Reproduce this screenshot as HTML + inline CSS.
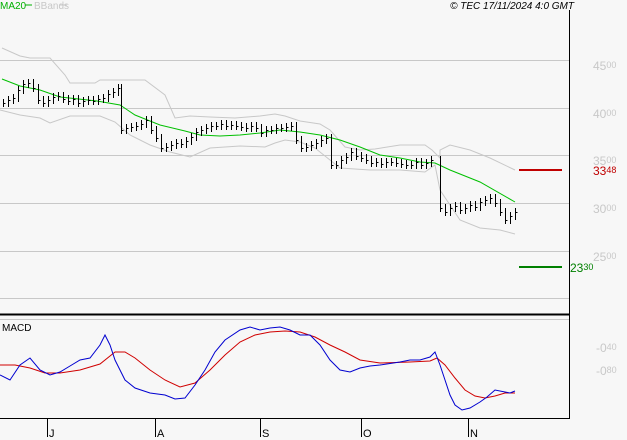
<!DOCTYPE html>
<html><head><style>
body{margin:0;background:#f7f7f7;width:627px;height:440px;overflow:hidden;font-family:"Liberation Sans",sans-serif}
svg{position:absolute;left:0;top:0}
text{font-family:"Liberation Sans",sans-serif}
</style></head><body>
<svg width="627" height="440" xmlns="http://www.w3.org/2000/svg" id="s">
<rect width="627" height="440" fill="#f7f7f7"/>
<g stroke="#c8c8c8" stroke-width="1">
<line x1="0" y1="60.5" x2="569" y2="60.5"/>
<line x1="0" y1="108.5" x2="569" y2="108.5"/>
<line x1="0" y1="155.5" x2="569" y2="155.5"/>
<line x1="0" y1="203.5" x2="569" y2="203.5"/>
<line x1="0" y1="251.5" x2="569" y2="251.5"/>
<line x1="0" y1="298.5" x2="569" y2="298.5"/>
<line x1="0" y1="319.5" x2="569" y2="319.5"/>
</g>
<line x1="569.5" y1="10" x2="569.5" y2="419" stroke="#000"/>
<line x1="0" y1="314.5" x2="569" y2="314.5" stroke="#000" stroke-width="2"/>
<line x1="0" y1="418.5" x2="570" y2="418.5" stroke="#000"/>
<g stroke="#000">
<line x1="47.5" y1="419" x2="47.5" y2="437"/><line x1="155.5" y1="419" x2="155.5" y2="437"/>
<line x1="260.5" y1="419" x2="260.5" y2="437"/><line x1="361.5" y1="419" x2="361.5" y2="437"/>
<line x1="468.5" y1="419" x2="468.5" y2="437"/>
</g>
<g font-size="11" fill="#000">
<text x="49" y="437">J</text><text x="157" y="437">A</text><text x="262" y="437">S</text><text x="363" y="437">O</text><text x="470" y="437">N</text>
</g>
<g font-size="12" fill="#c8c8c8">
<text x="593" y="70">45<tspan font-size="9" dy="-2">00</tspan></text>
<text x="593" y="118">40<tspan font-size="9" dy="-2">00</tspan></text>
<text x="593" y="165">35<tspan font-size="9" dy="-2">00</tspan></text>
<text x="593" y="213">30<tspan font-size="9" dy="-2">00</tspan></text>
<text x="593" y="261">25<tspan font-size="9" dy="-2">00</tspan></text>
<text x="596" y="352">-0<tspan font-size="9" dy="-2">40</tspan></text>
<text x="596" y="375">-0<tspan font-size="9" dy="-2">80</tspan></text>
</g>
<text x="593" y="175" font-size="12" fill="#c00000">33<tspan font-size="9" dy="-2">48</tspan></text>
<text x="570" y="272" font-size="12" fill="#008000">23<tspan font-size="9" dy="-2">30</tspan></text>
<line x1="519" y1="170" x2="562" y2="170" stroke="#c00000" stroke-width="2"/>
<line x1="519" y1="267" x2="562" y2="267" stroke="#008000" stroke-width="2"/>
<text x="0" y="9" font-size="10" fill="#00b000">MA20</text>
<line x1="25" y1="5" x2="32" y2="5" stroke="#00b000"/>
<text x="34" y="9" font-size="10" fill="#c8c8c8">BBands</text>
<line x1="60" y1="5" x2="67" y2="5" stroke="#c8c8c8"/>
<text x="574" y="9" font-size="10" font-style="italic" text-anchor="end" fill="#000">© TEC 17/11/2024 4:0 GMT</text>
<text x="2" y="331" font-size="10" fill="#000">MACD</text>
<g fill="none" stroke-width="1">
<polyline stroke="#c8c8c8" points="2,48 20,56 30,58 50,58 65,75 70,83 95,83 100,80 115,80 145,80 165,95 175,118 190,116 210,117 235,118 260,116 275,114 285,116 300,121 320,124 330,130 345,147 360,150 375,149 400,145 425,145 432,150 440,158 440,150 450,145 470,150 490,158 515,170"/>
<polyline stroke="#c8c8c8" points="0,110 20,115 40,118 50,123 70,116 100,116 115,122 130,135 150,145 170,152 190,157 210,148 240,146 265,147 275,143 285,140 300,142 315,148 340,168 370,170 400,170 425,172 435,165 440,190 460,220 480,228 500,230 515,234"/>
<polyline stroke="#00c000" points="2,79 20,86 40,90 60,97 97,101 120,105 135,115 160,125 185,131 200,135 220,136 240,135 260,133 280,130 300,132 320,135 340,140 360,147 380,155 400,158 420,162 435,163 450,170 480,182 515,202"/>
<polyline stroke="#d00000" points="0,365 15,365 30,368 45,373 60,373 80,370 100,364 115,352 125,352 135,358 150,370 165,380 180,387 195,383 210,370 225,355 240,342 255,335 270,332 285,331 300,332 315,337 330,345 345,352 360,360 380,363 410,362 430,361 437,358 445,365 455,378 465,390 475,396 485,398 495,396 505,393 515,393"/>
<polyline stroke="#0000d0" points="0,375 10,380 20,365 30,358 40,370 50,375 60,372 70,366 80,360 90,358 100,345 105,335 110,345 115,360 125,380 135,388 150,393 165,395 175,399 185,398 195,385 205,370 215,352 225,340 240,330 250,327 260,330 270,328 280,327 290,330 300,335 310,335 320,345 330,360 340,370 350,372 360,368 370,366 380,365 400,362 410,360 420,360 430,357 435,352 440,365 445,380 450,395 455,405 462,410 470,408 480,402 487,397 495,390 505,392 510,393 515,391"/>
</g>
<g id="bars" stroke="#000" stroke-width="1"></g>
</svg>
<script>
var d=[[3,103],[8,100],[13,98],[18,90],[23,84],[28,83],[33,88],[38,100],[43,103],[48,100],[53,97],[58,96],[63,99],[68,101],[73,99],[78,103],[83,101],[88,100],[93,101],[98,99],[103,98],[108,94],[113,92],[118,88],[121,130],[126,128],[131,127],[136,126],[141,124],[146,120],[151,130],[156,138],[161,148],[166,147],[171,145],[176,143],[181,144],[186,141],[191,137],[196,132],[201,130],[206,128],[211,126],[216,126],[221,124],[226,126],[231,125],[236,126],[241,127],[246,128],[251,126],[256,128],[261,133],[266,130],[271,130],[276,128],[281,128],[286,127],[291,126],[296,140],[301,148],[306,147],[311,145],[316,143],[321,140],[326,138],[331,165],[336,165],[341,160],[346,157],[351,152],[356,156],[361,158],[366,160],[371,163],[376,162],[381,164],[386,162],[391,162],[396,163],[401,164],[406,165],[411,165],[416,162],[421,165],[426,163],[431,160],[440,208],[445,212],[450,208],[455,206],[460,210],[465,208],[470,205],[475,207],[480,202],[485,200],[490,198],[495,203],[500,212],[505,220],[510,216],[515,212]];
var g=document.getElementById('bars'),ns='http://www.w3.org/2000/svg';
d.forEach(function(b,i){var x=b[0]+.5,y=b[1],o=i?d[i-1][1]:y,t=Math.min(y,o)-4,bt=Math.max(y,o)+4;
var l=document.createElementNS(ns,'line');l.setAttribute('x1',x);l.setAttribute('x2',x);l.setAttribute('y1',t);l.setAttribute('y2',bt);g.appendChild(l);
var c=document.createElementNS(ns,'line');c.setAttribute('x1',x);c.setAttribute('x2',x+2);c.setAttribute('y1',y+.5);c.setAttribute('y2',y+.5);g.appendChild(c);});
</script>
</body></html>
